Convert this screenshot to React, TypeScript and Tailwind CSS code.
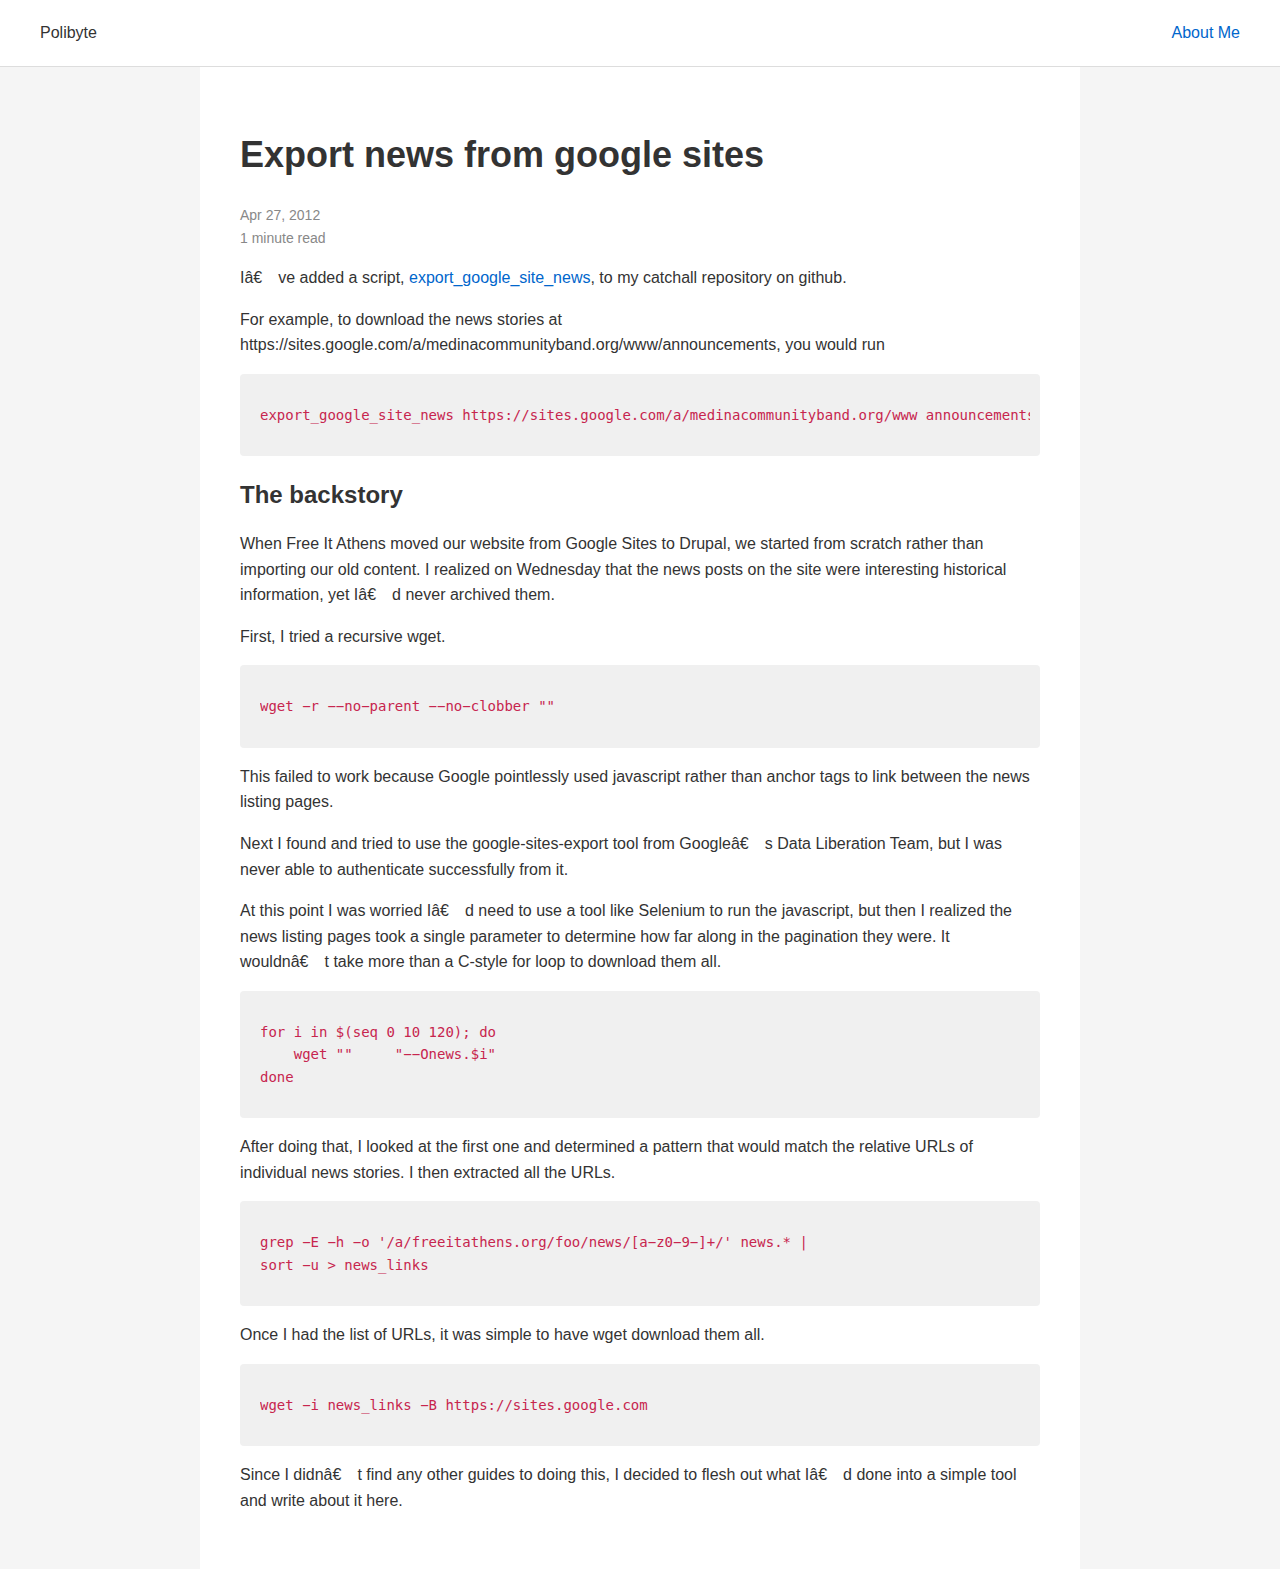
import React from "react";

function Word({ w }: { w: string }) {
  const [a, b] = w.split("'");
  return (
    <span className="whitespace-nowrap">
      {a}
      {"\u00e2\u20ac\u0099"}
      <span className="inline-block w-[3px]" />
      {b}
    </span>
  );
}

function T({ s }: { s: string }) {
  const parts = s.split(/(\S*'\S*)/);
  return (
    <>
      {parts.map((p, i) => (i % 2 === 1 ? <Word key={i} w={p} /> : <React.Fragment key={i}>{p}</React.Fragment>))}
    </>
  );
}

function P({ children }: { children: React.ReactNode }) {
  return <p className="mb-4 text-[16px] leading-[1.6] text-[#333]">{children}</p>;
}

function Code({ lines }: { lines: string[] }) {
  return (
    <pre
      className="mb-4 rounded-[4px] bg-[#f0f0f0] pl-5 pr-[10px] py-[30px] text-[14px] leading-[1.6] text-[#c7254e] whitespace-pre"
      style={{ fontFamily: '"DejaVu Sans Mono", monospace' }}
    >
      <div className="overflow-hidden">{lines.join("\n").replace(/-/g, "\u2212")}</div>
    </pre>
  );
}

export default function App() {
  return (
    <div className="min-h-screen bg-[#f5f5f5]" style={{ fontFamily: '"Liberation Sans", Arial, sans-serif' }}>
      <header className="flex h-[67px] items-center justify-between border-b border-[#dddddd] bg-white px-10 text-[16px]">
        <span className="text-[#333]">Polibyte</span>
        <a className="text-[#0066cc]" href="#">About Me</a>
      </header>
      <main className="mx-auto w-[880px] bg-white px-10 pt-[64px] pb-[42px]">
        <h1 className="text-[36px] font-bold leading-[48px] text-[#333]">Export news from google sites</h1>
        <div className="mt-[25px] text-[14px] leading-[23px] text-[#888]">
          <div>Apr 27, 2012</div>
          <div>1 minute read</div>
        </div>
        <div className="mt-[15px]">
          <P>
            <T s="I've added a script, " />
            <a className="text-[#0066cc]" href="#">export_google_site_news</a>
            , to my catchall repository on github.
          </P>
          <P>
            For example, to download the news stories at
            https://sites.google.com/a/medinacommunityband.org/www/announcements, you would run
          </P>
          <Code lines={["export_google_site_news https://sites.google.com/a/medinacommunityband.org/www announcements"]} />
          <h2 className="mt-[25px] mb-[21px] text-[24px] font-bold leading-[1.2] text-[#333]">The backstory</h2>
          <P>
            <T s="When Free It Athens moved our website from Google Sites to Drupal, we started from scratch rather than importing our old content. I realized on Wednesday that the news posts on the site were interesting historical information, yet I'd never archived them." />
          </P>
          <P>First, I tried a recursive wget.</P>
          <Code lines={['wget -r --no-parent --no-clobber ""']} />
          <P>
            This failed to work because Google pointlessly used javascript rather than anchor tags to link between the news listing pages.
          </P>
          <P>
            <T s="Next I found and tried to use the google-sites-export tool from Google's Data Liberation Team, but I was never able to authenticate successfully from it." />
          </P>
          <P>
            <T s="At this point I was worried I'd need to use a tool like Selenium to run the javascript, but then I realized the news listing pages took a single parameter to determine how far along in the pagination they were. It wouldn't take more than a C-style for loop to download them all." />
          </P>
          <Code lines={["for i in $(seq 0 10 120); do", '    wget ""     "--Onews.$i"', "done"]} />
          <P>
            After doing that, I looked at the first one and determined a pattern that would match the relative URLs of individual news stories. I then extracted all the URLs.
          </P>
          <Code lines={["grep -E -h -o '/a/freeitathens.org/foo/news/[a-z0-9-]+/' news.* |", "sort -u > news_links"]} />
          <P>Once I had the list of URLs, it was simple to have wget download them all.</P>
          <Code lines={["wget -i news_links -B https://sites.google.com"]} />
          <P>
            <T s="Since I didn't find any other guides to doing this, I decided to flesh out what I'd done into a simple tool and write about it here." />
          </P>
        </div>
      </main>
    </div>
  );
}
